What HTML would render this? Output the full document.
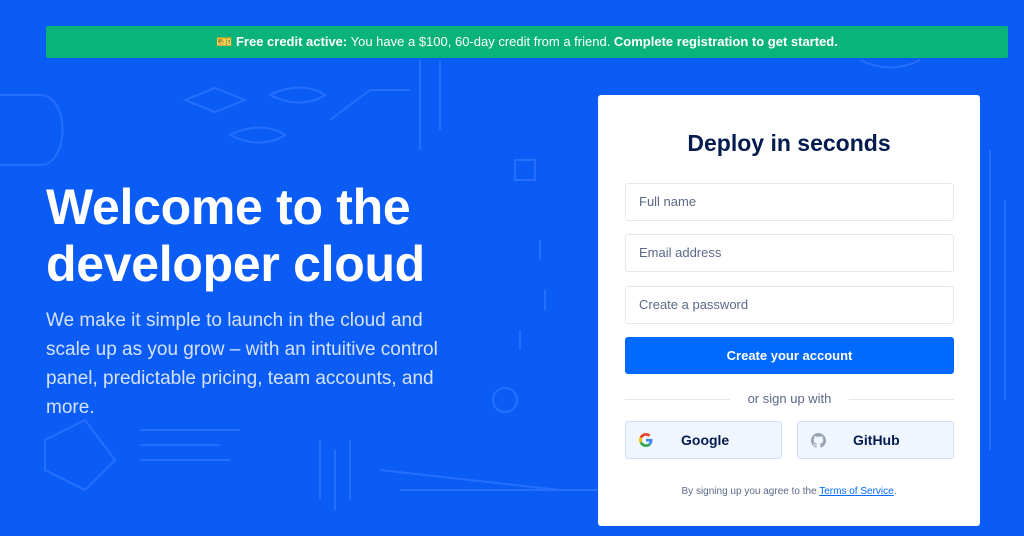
<!DOCTYPE html>
<html><head><meta charset="utf-8"><style>
*{margin:0;padding:0;box-sizing:border-box}
body{width:1024px;height:536px;overflow:hidden;background:#0b5cf5;font-family:"Liberation Sans",sans-serif;position:relative}
.deco{position:absolute;left:0;top:0}
.banner{position:absolute;left:46px;top:26px;width:962px;height:32px;background:#0ab37a;color:#fff;font-size:13px;text-align:center;line-height:32px;border-radius:2px}
.banner b{font-weight:bold}
h1{position:absolute;left:46px;top:179px;color:#fff;font-size:50px;line-height:57px;font-weight:bold;letter-spacing:-0.3px}
p.lead{position:absolute;left:46px;top:306px;width:418px;color:#d4e2ff;font-size:19px;line-height:29px}
.card{position:absolute;left:598px;top:95px;width:382px;height:431px;background:#fff;border-radius:3px}
.card h2{position:absolute;left:0;width:100%;top:35px;text-align:center;font-size:23px;color:#031b4e;font-weight:bold}
.in{position:absolute;left:27px;width:329px;height:38px;border:1px solid #e4e8ee;border-radius:3px;font-size:13px;color:#5b6987;padding-left:13px;line-height:36px}
.btn{position:absolute;left:27px;top:242px;width:329px;height:37px;background:#0069ff;border-radius:3px;color:#fff;font-weight:bold;font-size:13px;text-align:center;line-height:37px}
.or{position:absolute;left:27px;top:296px;width:329px;text-align:center;font-size:13px;color:#5b6987}
.or:before,.or:after{content:"";position:absolute;top:8px;width:105px;height:1px;background:#e4e8ee}
.or:before{left:0}.or:after{right:0}
.sb{position:absolute;top:326px;width:157px;height:38px;background:#f0f6ff;border:1px solid #cfe0fa;border-radius:3px;font-weight:bold;font-size:14px;color:#031b4e;line-height:36px}
.sb span{position:absolute;left:55px}
.sb svg{position:absolute;left:13px;top:11px}
.terms{position:absolute;top:391px;width:100%;text-align:center;font-size:10px;color:#5b6987}
.terms u{color:#0069ff}
</style></head><body>
<svg class="deco" width="1024" height="536" fill="none" stroke="#2d74ff" stroke-width="2" opacity="0.8">
<path d="M0 95h40c30 0 30 70 0 70H0"/><path d="M185 100l30-12 30 12-30 12z"/><path d="M270 95c20-10 40-10 55 0-15 10-35 10-55 0z"/>
<path d="M230 135c20-10 40-10 55 0-15 10-35 10-55 0z"/><path d="M330 120l40-30h40"/><path d="M420 60v90"/><path d="M440 60v70"/>
<rect x="515" y="160" width="20" height="20"/><path d="M540 240v20M545 290v20M520 330v20"/>
<path d="M45 440l40-20 30 40-30 30-40-20z"/><path d="M140 430h100M140 445h80M140 460h90"/>
<path d="M400 490h200M380 470l180 20"/><path d="M990 150v300M1005 200v200"/><path d="M860 60c20 10 40 10 60 0"/>
<circle cx="505" cy="400" r="12"/><path d="M320 440v60M335 450v60M350 440v60"/>
</svg>
<div class="banner">🎫 <b>Free credit active:</b> You have a $100, 60-day credit from a friend. <b>Complete registration to get started.</b></div>
<h1>Welcome to the<br>developer cloud</h1>
<p class="lead">We make it simple to launch in the cloud and scale up as you grow – with an intuitive control panel, predictable pricing, team accounts, and more.</p>
<div class="card">
<h2>Deploy in seconds</h2>
<div class="in" style="top:88px">Full name</div>
<div class="in" style="top:139px">Email address</div>
<div class="in" style="top:191px">Create a password</div>
<div class="btn">Create your account</div>
<div class="or">or sign up with</div>
<div class="sb" style="left:27px"><svg width="14" height="14" viewBox="0 0 48 48"><path fill="#EA4335" d="M24 9.5c3.5 0 6.6 1.2 9 3.5l6.7-6.7C35.6 2.4 30.2 0 24 0 14.6 0 6.6 5.4 2.7 13.2l7.8 6C12.4 13.7 17.7 9.5 24 9.5z"/><path fill="#4285F4" d="M46.1 24.5c0-1.6-.1-3.1-.4-4.5H24v9h12.4c-.5 2.9-2.2 5.4-4.7 7l7.6 5.9c4.4-4.1 6.8-10.1 6.8-17.4z"/><path fill="#FBBC05" d="M10.5 28.8c-.5-1.5-.8-3.1-.8-4.8s.3-3.3.8-4.8l-7.8-6C1 16.5 0 20.1 0 24s1 7.5 2.7 10.8l7.8-6z"/><path fill="#34A853" d="M24 48c6.5 0 11.9-2.1 15.9-5.8l-7.6-5.9c-2.1 1.4-4.9 2.3-8.3 2.3-6.3 0-11.6-4.2-13.5-9.9l-7.8 6C6.6 42.6 14.6 48 24 48z"/></svg><span>Google</span></div>
<div class="sb" style="left:199px"><svg width="15" height="15" viewBox="0 0 16 16"><path fill="#9aa3b5" d="M8 0C3.6 0 0 3.6 0 8c0 3.5 2.3 6.5 5.5 7.6.4.1.5-.2.5-.4v-1.4c-2.2.5-2.7-1-2.7-1-.4-.9-.9-1.2-.9-1.2-.7-.5.1-.5.1-.5.8.1 1.2.8 1.2.8.7 1.2 1.9.9 2.3.7.1-.5.3-.9.5-1.1-1.8-.2-3.6-.9-3.6-4 0-.9.3-1.6.8-2.1-.1-.2-.4-1 .1-2.1 0 0 .7-.2 2.2.8.6-.2 1.3-.3 2-.3s1.4.1 2 .3c1.5-1 2.2-.8 2.2-.8.4 1.1.2 1.9.1 2.1.5.6.8 1.3.8 2.1 0 3.1-1.9 3.7-3.6 3.9.3.3.5.8.5 1.5v2.2c0 .2.1.5.6.4C13.7 14.5 16 11.5 16 8c0-4.4-3.6-8-8-8z"/></svg><span>GitHub</span></div>
<div class="terms">By signing up you agree to the <u>Terms of Service</u>.</div>
</div>
</body></html>
